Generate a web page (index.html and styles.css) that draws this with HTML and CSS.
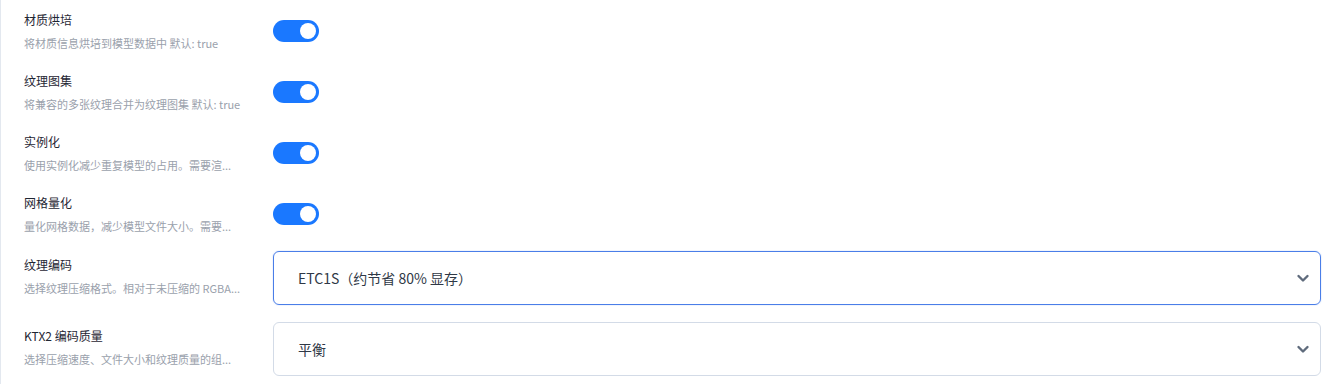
FILE: index.html
```html
<!DOCTYPE html>
<html lang="zh-CN">
<head>
<meta charset="utf-8">
<title>设置</title>
<link rel="stylesheet" href="styles.css">
</head>
<body>
<div class="panel">
  <div class="row row-toggle">
    <div class="label">
      <div class="title">材质烘培</div>
      <div class="desc">将材质信息烘培到模型数据中 默认: true</div>
    </div>
    <div class="toggle on"><span class="knob"></span></div>
  </div>
  <div class="row row-toggle">
    <div class="label">
      <div class="title">纹理图集</div>
      <div class="desc">将兼容的多张纹理合并为纹理图集 默认: true</div>
    </div>
    <div class="toggle on"><span class="knob"></span></div>
  </div>
  <div class="row row-toggle">
    <div class="label">
      <div class="title">实例化</div>
      <div class="desc">使用实例化减少重复模型的占用。需要渲...</div>
    </div>
    <div class="toggle on"><span class="knob"></span></div>
  </div>
  <div class="row row-toggle">
    <div class="label">
      <div class="title">网格量化</div>
      <div class="desc">量化网格数据，减少模型文件大小。需要...</div>
    </div>
    <div class="toggle on"><span class="knob"></span></div>
  </div>
  <div class="row row-select">
    <div class="label">
      <div class="title">纹理编码</div>
      <div class="desc">选择纹理压缩格式。相对于未压缩的 RGBA...</div>
    </div>
    <div class="select focused">
      <span class="value">ETC1S（约节省 80% 显存）</span>
      <svg class="chev" width="14" height="14" viewBox="0 0 14 14"><path d="M2.5 5 L7 9.5 L11.5 5" fill="none" stroke="#5f6b7c" stroke-width="2.4" stroke-linecap="round" stroke-linejoin="round"/></svg>
    </div>
  </div>
  <div class="row row-select">
    <div class="label">
      <div class="title">KTX2 编码质量</div>
      <div class="desc">选择压缩速度、文件大小和纹理质量的组...</div>
    </div>
    <div class="select">
      <span class="value">平衡</span>
      <svg class="chev" width="14" height="14" viewBox="0 0 14 14"><path d="M2.5 5 L7 9.5 L11.5 5" fill="none" stroke="#5f6b7c" stroke-width="2.4" stroke-linecap="round" stroke-linejoin="round"/></svg>
    </div>
  </div>
</div>
</body>
</html>
```
FILE: styles.css
```css
html, body {
  margin: 0;
  padding: 0;
  background: #ffffff;
  font-family: "Noto Sans CJK SC", "Noto Sans", sans-serif;
}

.panel {
  border-left: 1px solid #e3e8ef;
  padding: 0 10px 0 23px;
  height: 384px;
  box-sizing: border-box;
}

.row {
  display: flex;
  align-items: center;
  gap: 28px;
}

.row-toggle {
  padding: 11px 0 10px;
}

.row-select {
  padding: 7px 0 10px;
  align-items: flex-start;
}

.row-select .label {
  padding-top: 5px;
}

.label {
  width: 221px;
  flex: none;
  display: flex;
  flex-direction: column;
  gap: 6px;
}

.title {
  font-size: 12px;
  line-height: 18px;
  color: #1f2633;
  font-weight: 400;
}

.desc {
  font-size: 11px;
  line-height: 16px;
  color: #9aa1ac;
  white-space: nowrap;
  overflow: hidden;
}

.toggle {
  width: 46px;
  height: 22px;
  border-radius: 11px;
  background: #1a78ff;
  box-sizing: border-box;
  display: flex;
  align-items: center;
  justify-content: flex-end;
  padding-right: 3px;
  flex: none;
}

.knob {
  width: 16px;
  height: 16px;
  border-radius: 50%;
  background: #ffffff;
}

.select {
  flex: 1;
  height: 54px;
  box-sizing: border-box;
  border: 1px solid #d3dbe7;
  border-radius: 6px;
  display: flex;
  align-items: center;
  justify-content: space-between;
  padding: 0 10px 0 24px;
  background: #ffffff;
}

.select.focused {
  border-color: #4a7ee8;
  box-shadow: 0 0 0 1px rgba(74, 126, 232, 0.08);
}

.value {
  font-size: 14px;
  color: #2f3846;
}

.chev {
  display: block;
}
```
